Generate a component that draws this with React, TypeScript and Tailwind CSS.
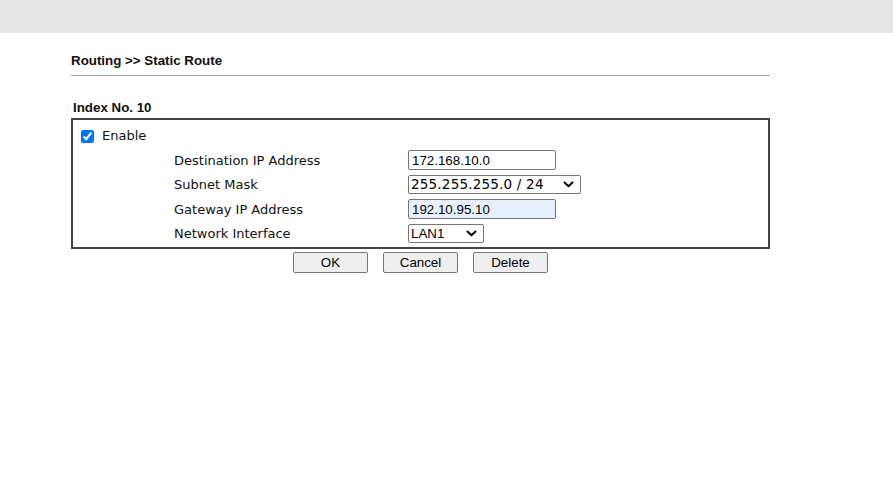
const rows = [
  { label: 'Destination IP Address', kind: 'input', value: '172.168.10.0' },
  { label: 'Subnet Mask', kind: 'select', value: '255.255.255.0 / 24' },
  { label: 'Gateway IP Address', kind: 'input', value: '192.10.95.10', filled: true },
  { label: 'Network Interface', kind: 'select-small', value: 'LAN1' },
]

const Chevron = () => (
  <svg width="11" height="7" viewBox="0 0 11 7" className="pointer-events-none">
    <path d="M1.5 1.5 L5.5 5.2 L9.5 1.5" fill="none" stroke="#000" strokeWidth="2" strokeLinecap="round" strokeLinejoin="round" />
  </svg>
)

const SelectBox = ({ value, wide }: { value: string; wide?: boolean }) => (
  <div
    className={`flex items-center justify-between h-[19px] border border-[#767676] rounded-[2px] bg-white pl-[2px] pr-[6px] ${
      wide ? "w-[173px] font-['DejaVu_Sans',sans-serif] text-[13.5px] tracking-[0.2px]" : "w-[76px] font-['Liberation_Sans',Arial,sans-serif] text-[13.33px]"
    }`}
  >
    <span className="leading-none text-black">{value}</span>
    <Chevron />
  </div>
)

const App = () => {
  return (
    <div className="min-h-[492px] bg-white">
      <div className="h-[33px] bg-[#e6e6e6]" />
      <div className="ml-[71px] w-[699px]">
        <div className="mt-[20px] pb-[7px] border-b border-[#a0a0a0] font-['Liberation_Sans',Arial,sans-serif] text-[13.33px] font-bold leading-[15px] text-[#111]">
          Routing &gt;&gt; Static Route
        </div>
        <div className="mt-[24px] pl-[2px] font-['Liberation_Sans',Arial,sans-serif] text-[13.33px] font-bold leading-[15px] text-[#111]">
          Index No. 10
        </div>
        <div className="mt-[3px] border-2 border-[#444] font-['DejaVu_Sans',Verdana,sans-serif] text-[13px] text-[#111]">
          <div className="flex items-center h-[28px] pt-[4px] pl-[8px]">
            <input type="checkbox" defaultChecked className="w-[13px] h-[13px] m-0 accent-[#0075ff]" />
            <span className="ml-[8px]">Enable</span>
          </div>
          {rows.map((r) => (
            <div key={r.label} className="flex items-center h-[24.5px]">
              <div className="w-[335px] pl-[101px]">{r.label}</div>
              {r.kind === 'input' && (
                <input
                  readOnly
                  value={r.value}
                  className={`w-[148px] h-[20px] border border-[#767676] rounded-[2px] px-[3px] font-['Liberation_Sans',Arial,sans-serif] text-[13.33px] text-black outline-none ${
                    r.filled ? 'bg-[#e8f0fe]' : 'bg-white'
                  }`}
                />
              )}
              {r.kind === 'select' && <SelectBox value={r.value} wide />}
              {r.kind === 'select-small' && <SelectBox value={r.value} />}
            </div>
          ))}
          <div className="h-[1px]" />
        </div>
        <div className="flex justify-center gap-[15px] mt-[3px]">
          {['OK', 'Cancel', 'Delete'].map((b) => (
            <button
              key={b}
              className="w-[75px] h-[21px] border border-[#767676] rounded-[2px] bg-[#efefef] font-['Liberation_Sans',Arial,sans-serif] text-[13.33px] leading-none text-black"
            >
              {b}
            </button>
          ))}
        </div>
      </div>
    </div>
  )
}

export default App
